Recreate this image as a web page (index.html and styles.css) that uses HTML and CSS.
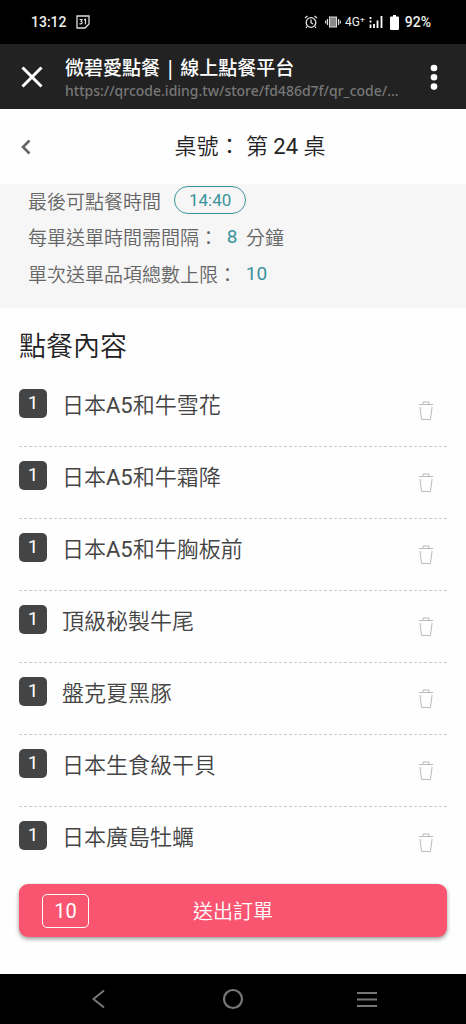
FILE: index.html
```html
<!DOCTYPE html>
<html lang="zh-Hant">
<head>
<meta charset="utf-8">
<meta name="viewport" content="width=device-width, initial-scale=1">
<title>微碧愛點餐 | 線上點餐平台</title>
<link rel="stylesheet" href="styles.css">
</head>
<body>
<svg class="sprite" aria-hidden="true">
  <symbol id="trash" viewBox="0 0 16 20">
    <path d="M1 3.5H15M5 3V1H11V3M2 6L3.5 18.5H12.5L14 6" fill="none" stroke="currentColor"/>
  </symbol>
</svg>
<div class="status">
  <span class="clock">13:12</span>
  <svg width="14" height="14" viewBox="0 0 14 14"><path d="M1 1H13V9L9 13H1Z" fill="none" stroke="#ddd" stroke-width="1.3"/><path d="M3.5 4.5H6L5 6.3Q6.5 6.8 6 8.2Q5 9.4 3.5 8.6M8 5L9.5 4.3V9.3" fill="none" stroke="#ddd" stroke-width="1.2"/></svg>
  <span class="spacer"></span>
  <svg class="alarm" width="14" height="14" viewBox="0 0 14 14" fill="none" stroke="#e6e6e6" stroke-width="1.3"><circle cx="7" cy="7.5" r="4.8"/><path d="M7 4.5V7.7L9 9M1 3L3.5 1M13 3L10.5 1M3 11.5L2 13M11 11.5L12 13"/></svg>
  <svg class="vibrate" width="16" height="12" viewBox="0 0 16 12"><rect x="4.5" y="1" width="7" height="10" fill="#888" stroke="#ddd"/><path d="M2.5 3V9M.7 4.5V7.5M13.5 3V9M15.3 4.5V7.5" stroke="#ddd" stroke-width="1.2"/></svg>
  <span class="network">4G⁺</span>
  <svg class="signal" width="14" height="12" viewBox="0 0 14 12"><path d="M1.5 1V3M1.5 4.5V6.5M1.5 8.5V12M5 8V12M8.5 4.5V12M12.5 0V12" stroke="#fff" stroke-width="1.8"/></svg>
  <svg class="battery" width="9" height="15" viewBox="0 0 9 15"><path d="M3 0H6V1.5H8Q9 1.5 9 2.5V14Q9 15 8 15H1Q0 15 0 14V2.5Q0 1.5 1 1.5H3Z" fill="#fff"/></svg>
  <span class="percent">92%</span>
</div>
<header class="browser">
  <button class="icon" aria-label="關閉"><svg width="24" height="24" viewBox="0 0 24 24"><path d="M2.5 2.5L21.5 21.5M21.5 2.5L2.5 21.5" stroke="#fff" stroke-width="3"/></svg></button>
  <div class="address">
    <div class="page-title">微碧愛點餐 | 線上點餐平台</div>
    <div class="url">https://qrcode.iding.tw/store/fd486d7f/qr_code/...</div>
  </div>
  <button class="icon" aria-label="更多"><svg width="8" height="26" viewBox="0 0 8 26" fill="#fff"><circle cx="4" cy="4" r="3.3"/><circle cx="4" cy="13.3" r="3.3"/><circle cx="4" cy="22.6" r="3.3"/></svg></button>
</header>
<div class="table-bar">
  <button class="icon" aria-label="返回"><svg width="12" height="16" viewBox="0 0 12 16"><path d="M9.5 1.5L3 8L9.5 14.5" fill="none" stroke="#666" stroke-width="2.6"/></svg></button>
  <h1>桌號： 第 24 桌</h1>
</div>
<section class="info">
  <p>最後可點餐時間<span class="pill">14:40</span></p>
  <p>每單送單時間需間隔： <b>8</b> 分鐘</p>
  <p>單次送單品項總數上限： <b>10</b></p>
</section>
<main class="order">
  <h2>點餐內容</h2>
  <ul>
    <li><span class="qty">1</span><span class="name">日本A5和牛雪花</span><button class="remove" aria-label="刪除"><svg><use href="#trash"/></svg></button></li>
    <li><span class="qty">1</span><span class="name">日本A5和牛霜降</span><button class="remove" aria-label="刪除"><svg><use href="#trash"/></svg></button></li>
    <li><span class="qty">1</span><span class="name">日本A5和牛胸板前</span><button class="remove" aria-label="刪除"><svg><use href="#trash"/></svg></button></li>
    <li><span class="qty">1</span><span class="name">頂級秘製牛尾</span><button class="remove" aria-label="刪除"><svg><use href="#trash"/></svg></button></li>
    <li><span class="qty">1</span><span class="name">盤克夏黑豚</span><button class="remove" aria-label="刪除"><svg><use href="#trash"/></svg></button></li>
    <li><span class="qty">1</span><span class="name">日本生食級干貝</span><button class="remove" aria-label="刪除"><svg><use href="#trash"/></svg></button></li>
    <li><span class="qty">1</span><span class="name">日本廣島牡蠣</span><button class="remove" aria-label="刪除"><svg><use href="#trash"/></svg></button></li>
  </ul>
  <button class="submit"><span class="count">10</span><span>送出訂單</span></button>
</main>
<nav class="system">
  <button class="icon" aria-label="返回"><svg width="24" height="24" viewBox="0 0 24 24"><path d="M17 3.5L6.5 12L17 20.5" fill="none" stroke="#777" stroke-width="2"/></svg></button>
  <button class="icon" aria-label="主畫面"><svg width="24" height="24" viewBox="0 0 24 24"><circle cx="12" cy="12" r="9" fill="none" stroke="#777" stroke-width="2.2"/></svg></button>
  <button class="icon" aria-label="最近使用"><svg width="24" height="24" viewBox="0 0 24 24"><path d="M2 6H22M2 12.5H22M2 19H22" stroke="#777" stroke-width="2.2"/></svg></button>
</nav>
</body>
</html>
```
FILE: styles.css
```css
* { box-sizing: border-box; }
body {
  margin: 0;
  min-height: 100vh;
  display: flex;
  flex-direction: column;
  background: #fefefe;
  color: #444;
  font-family: Roboto, "Noto Sans CJK TC DemiLight", "Noto Sans CJK TC", sans-serif;
  font-weight: 400;
}
h1, h2, p, ul { margin: 0; padding: 0; font-weight: 400; }
button { border: 0; padding: 0; background: none; color: inherit; font: inherit; }
.sprite { position: absolute; width: 0; height: 0; }
.icon { display: grid; place-items: center; }

.status {
  display: flex;
  align-items: center;
  height: 44px;
  padding: 0 35px 0 31px;
  background: #000;
  color: #eee;
  font-size: 14px;
  font-weight: 500;
}
.clock { margin-right: 9px; }
.spacer { flex: 1; }
.alarm { margin-right: 7px; }
.vibrate { margin-right: 4px; }
.network { margin-right: 4px; font-size: 12px; font-weight: 400; }
.signal { margin-right: 7px; }
.battery { margin-right: 6px; }

.browser {
  display: flex;
  align-items: center;
  height: 65px;
  padding: 0 28px 0 20px;
  background: #222;
}
.address { flex: 1; min-width: 0; margin-left: 21px; padding-top: 2px; }
.page-title {
  color: #fff;
  font-family: "Noto Sans", "Noto Sans CJK TC", sans-serif;
  font-size: 19px;
  font-weight: 500;
  line-height: 26px;
}
.url {
  overflow: hidden;
  color: #777;
  font-family: "Noto Sans", sans-serif;
  font-size: 14px;
  font-weight: 500;
  line-height: 20px;
  white-space: nowrap;
}

.table-bar {
  display: grid;
  grid-template-columns: 12px 1fr;
  align-items: center;
  height: 75px;
  padding: 0 20px;
}
.table-bar h1 {
  padding-left: 22px;
  color: #222;
  font-size: 22px;
  line-height: 32px;
  text-align: center;
}

.info {
  height: 124px;
  padding: 0 28px;
  background: #f6f6f6;
  color: #666;
  font-size: 19px;
}
.info p { display: flex; align-items: center; gap: 4px; height: 37px; white-space: pre; }
.info p:first-child { height: 34px; padding-bottom: 2px; }
.info b { color: #3a939b; font-weight: 400; }
.pill {
  margin-left: 9px;
  padding: 0 14px;
  border: 1px solid #3a939b;
  border-radius: 14px;
  color: #3a939b;
  font-size: 17px;
  line-height: 26px;
}

.order { flex: 1; padding: 19px 19px 0; }
.order h2 { color: #222; font-size: 27px; line-height: 40px; }
ul { margin-top: 8px; list-style: none; }
li {
  display: flex;
  align-items: center;
  height: 72px;
  padding-bottom: 14px;
  border-bottom: 1px dashed #ccc;
}
li:last-child { border-bottom-color: transparent; }
.qty {
  width: 28px;
  height: 29px;
  border-radius: 5px;
  background: #444;
  color: #fff;
  font-size: 19px;
  line-height: 28px;
  text-align: center;
}
.name { flex: 1; margin-left: 15px; padding-top: 4px; font-size: 22px; line-height: 32px; }
.remove { padding-top: 14px; margin-right: 13px; color: #bbb; }
.remove svg { display: block; width: 16px; height: 20px; }

.submit {
  display: grid;
  grid-template-columns: 47px 1fr 47px;
  align-items: center;
  width: 100%;
  height: 53px;
  margin-top: 5px;
  padding: 0 23px;
  border-radius: 9px;
  background: #fa5570;
  box-shadow: 0 2px 4px #999;
  color: #fff;
  font-size: 20px;
}
.count {
  border: 1px solid #fff;
  border-radius: 5px;
  line-height: 32px;
}

.system {
  display: flex;
  align-items: center;
  justify-content: space-between;
  height: 50px;
  padding: 0 87px;
  background: #000;
}
```
